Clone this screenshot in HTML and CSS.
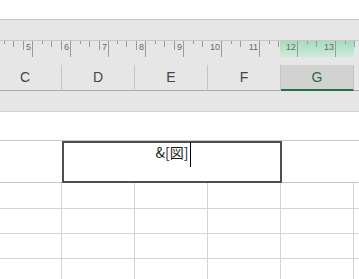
FILE: index.html
```html
<!DOCTYPE html>
<html lang="ja">
  <head>
    <meta charset="UTF-8" />
    <meta name="viewport" content="width=device-width, initial-scale=1.0" />
    <title>ページレイアウト</title>
    <link rel="stylesheet" href="styles.css">
  </head>
  <body>
    <div class="titlebar"></div>

    <div class="chrome">
      <!-- 水平ルーラー -->
      <svg class="ruler" width="359" height="20" viewBox="0 0 359 20">
        <defs>
          <linearGradient id="ruler-sel" x1="0" y1="0" x2="0" y2="1">
            <stop offset="0" stop-color="#a6dbbe" />
            <stop offset="1" stop-color="#cdecda" />
          </linearGradient>
        </defs>
        <rect x="0" y="0" width="359" height="1" fill="#c6c6c6" />
        <rect x="280" y="1" width="74" height="16" fill="url(#ruler-sel)" />
        <g stroke="#9a9a9a" stroke-width="1" fill="none">
          <path d="M32.5 1V17M70.5 1V17M108.5 1V17M145.5 1V17M183.5 1V17M221.5 1V17M259.5 1V17M297.5 1V17M335.5 1V17" />
          <path d="M13.5 1V7M51.5 1V7M89.5 1V7M126.5 1V7M164.5 1V7M202.5 1V7M240.5 1V7M278.5 1V7M316.5 1V7M354.5 1V7" />
          <path d="M23.5 1V10M61.5 1V10M99.5 1V10M136.5 1V10M174.5 1V10" />
          <path d="M4.5 1V4M42.5 1V4M80.5 1V4M117.5 1V4M155.5 1V4M193.5 1V4M231.5 1V4M269.5 1V4M307.5 1V4M345.5 1V4" />
        </g>
        <g class="ruler-num" text-anchor="end">
          <text x="31" y="10">5</text>
          <text x="69" y="10">6</text>
          <text x="107" y="10">7</text>
          <text x="144" y="10">8</text>
          <text x="182" y="10">9</text>
          <text x="220" y="10">10</text>
          <text x="258" y="10">11</text>
          <text x="296" y="10">12</text>
          <text x="334" y="10">13</text>
        </g>
      </svg>

      <!-- 列見出し -->
      <div class="col-heads">
        <div class="col-head">C</div>
        <div class="col-head">D</div>
        <div class="col-head">E</div>
        <div class="col-head">F</div>
        <div class="col-head selected">G</div>
        <div class="col-head last"></div>
      </div>
    </div>

    <div class="sheet">
      <div class="top-margin"></div>

      <!-- ヘッダー編集中 -->
      <div class="page-header">
        <div class="header-edit"><span class="header-text">&amp;[図]</span><span class="caret"></span></div>
      </div>

      <div class="grid">
        <div class="row">
          <div class="cell"></div><div class="cell"></div><div class="cell"></div>
          <div class="cell"></div><div class="cell"></div><div class="cell last"></div>
        </div>
        <div class="row">
          <div class="cell"></div><div class="cell"></div><div class="cell"></div>
          <div class="cell"></div><div class="cell"></div><div class="cell last"></div>
        </div>
        <div class="row">
          <div class="cell"></div><div class="cell"></div><div class="cell"></div>
          <div class="cell"></div><div class="cell"></div><div class="cell last"></div>
        </div>
        <div class="row">
          <div class="cell"></div><div class="cell"></div><div class="cell"></div>
          <div class="cell"></div><div class="cell"></div><div class="cell last"></div>
        </div>
      </div>
    </div>
  </body>
</html>
```

FILE: styles.css
```css
body {
  margin: 0;
  width: 359px;
  height: 279px;
  overflow: hidden;
  background-color: #fff;
  font-family: "Liberation Sans", Arial, sans-serif;
}

.titlebar {
  height: 19px;
  background-color: #fff;
  border-bottom: 1px solid #c6c6c6;
}

.chrome {
  background-color: #e6e6e6;
  padding: 20px 0;
  border-bottom: 1px solid #d4d4d4;
  overflow: hidden;
}

.ruler {
  display: block;
}
.ruler-num {
  font-family: "Liberation Sans", Arial, sans-serif;
  font-size: 9px;
  fill: #6a6a6a;
}

.col-heads {
  display: flex;
  margin: 5px 0 0 -11px;
}
.col-head {
  flex: none;
  width: 73px;
  height: 26px;
  box-sizing: border-box;
  border-right: 1px solid #c4c4c4;
  border-bottom: 1px solid #ababab;
  text-align: center;
  line-height: 25px;
  font-size: 14px;
  color: #444;
}
.col-head.selected {
  background-color: #d2d2d2;
  border-bottom: 2px solid #217346;
  line-height: 24px;
  color: #2f6b48;
}
.col-head.last,
.cell.last {
  width: 6px;
  border-right: none;
}

.top-margin {
  height: 28px;
}

.page-header {
  height: 41px;
  border-top: 1px solid #c8c8c8;
  border-bottom: 1px solid #c8c8c8;
}
.header-edit {
  margin-left: 62px;
  width: 220px;
  height: 42px;
  margin-bottom: -1px;
  box-sizing: border-box;
  border: 2px solid #4e4e4e;
  background-color: #fff;
  text-align: center;
  font-family: "Noto Sans CJK JP", sans-serif;
  font-size: 14px;
  line-height: 18px;
  color: #1a1a1a;
}
.caret {
  display: inline-block;
  width: 1px;
  height: 25px;
  margin: -1px -3px 0 2px;
  vertical-align: top;
  background-color: #000;
}

.grid {
  overflow: hidden;
}
.row {
  display: flex;
  margin-left: -11px;
  height: 25px;
  border-bottom: 1px solid #d4d4d4;
}
.row + .row {
  height: 24px;
}
.cell {
  flex: none;
  width: 73px;
  box-sizing: border-box;
  border-right: 1px solid #d4d4d4;
}
```
